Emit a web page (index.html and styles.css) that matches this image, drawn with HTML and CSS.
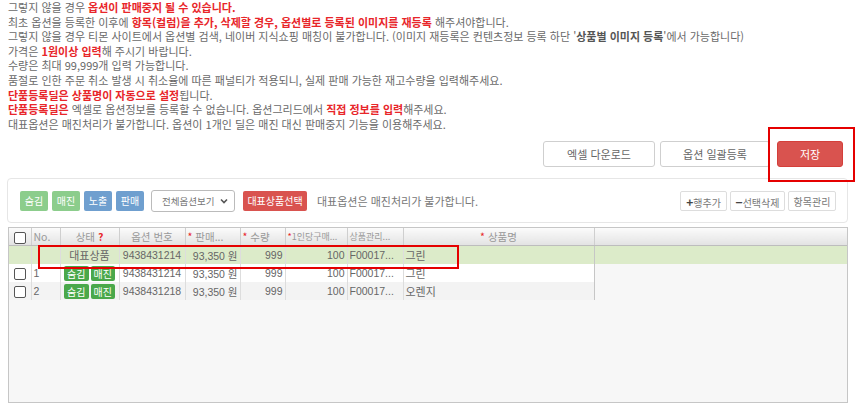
FILE: index.html
```html
<!DOCTYPE html>
<html lang="ko">
<head>
  <meta charset="UTF-8" />
  <meta name="viewport" content="width=device-width, initial-scale=1.0"/>
  <title>옵션 관리</title>
  <link rel="stylesheet" href="styles.css">
</head>
<body>
  <div class="page">
    <div class="notice">
      <p>그렇지 않을 경우 <b>옵션이 판매중지 될 수 있습니다.</b></p>
      <p>최초 옵션을 등록한 이후에 <b>항목(컬럼)을 추가, 삭제할 경우, 옵션별로 등록된 이미지를 재등록</b> 해주셔야합니다.</p>
      <p>그렇지 않을 경우 티몬 사이트에서 옵션별 검색, 네이버 지식쇼핑 매칭이 불가합니다. (이미지 재등록은 컨텐츠정보 등록 하단 '<strong>상품별 이미지 등록</strong>'에서 가능합니다)</p>
      <p>가격은 <b>1원이상 입력</b>해 주시기 바랍니다.</p>
      <p>수량은 최대 99,999개 입력 가능합니다.</p>
      <p>품절로 인한 주문 취소 발생 시 취소율에 따른 패널티가 적용되니, 실제 판매 가능한 재고수량을 입력해주세요.</p>
      <p><b>단품등록딜은 상품명이 자동으로 설정</b>됩니다.</p>
      <p><b>단품등록딜은</b> 엑셀로 옵션정보를 등록할 수 없습니다. 옵션그리드에서 <b>직접 정보를 입력</b>해주세요.</p>
      <p>대표옵션은 매진처리가 불가합니다. 옵션이 1개인 딜은 매진 대신 판매중지 기능을 이용해주세요.</p>
    </div>

    <div class="actions">
      <button class="btn btn-line btn-excel">엑셀 다운로드</button>
      <button class="btn btn-line btn-bulk">옵션 일괄등록</button>
      <button class="btn btn-save">저장</button>
    </div>

    <div class="toolbar">
      <div class="tool-left">
        <span class="chip chip-green">숨김</span>
        <span class="chip chip-green">매진</span>
        <span class="chip chip-blue">노출</span>
        <span class="chip chip-blue">판매</span>
        <div class="select">전체옵션보기
          <svg class="caret" width="8" height="6" viewBox="0 0 8 6"><path d="M1 1.5 L4 4.5 L7 1.5" fill="none" stroke="#555" stroke-width="1.6"/></svg>
        </div>
        <span class="chip chip-red">대표상품선택</span>
        <span class="hint">대표옵션은 매진처리가 불가합니다.</span>
      </div>
      <div class="tool-right">
        <span class="tbtn tbtn-add"><b>+</b>행추가</span>
        <span class="tbtn tbtn-del"><b>&minus;</b>선택삭제</span>
        <span class="tbtn tbtn-cols">항목관리</span>
      </div>
    </div>

    <div class="grid">
      <table>
        <colgroup>
          <col style="width:22px"><col style="width:29px"><col style="width:59px"><col style="width:66px">
          <col style="width:55px"><col style="width:45px"><col style="width:62px"><col style="width:56px">
          <col style="width:191px"><col>
        </colgroup>
        <thead>
          <tr>
            <th><span class="cb"></span></th>
            <th class="left">No.</th>
            <th>상태 <em>?</em></th>
            <th>옵션 번호</th>
            <th class="left"><i>*</i> 판매...</th>
            <th class="left"><i>*</i> 수량</th>
            <th class="left small"><i>*</i>1인당구매...</th>
            <th class="left small">상품관리...</th>
            <th><i>*</i> 상품명</th>
            <th class="fill"></th>
          </tr>
        </thead>
        <tbody>
          <tr class="main">
            <td></td><td></td>
            <td class="center ko">대표상품</td>
            <td class="center">9438431214</td>
            <td class="right">93,350 원</td>
            <td class="right">999</td>
            <td class="right">100</td>
            <td>F00017...</td>
            <td class="ko">그린</td>
            <td class="fill"></td>
          </tr>
          <tr>
            <td class="center"><span class="cb"></span></td><td>1</td>
            <td class="center"><span class="tag">숨김</span><span class="tag">매진</span></td>
            <td class="center">9438431214</td>
            <td class="right">93,350 원</td>
            <td class="right">999</td>
            <td class="right">100</td>
            <td>F00017...</td>
            <td class="ko">그린</td>
            <td class="fill"></td>
          </tr>
          <tr class="alt">
            <td class="center"><span class="cb"></span></td><td>2</td>
            <td class="center"><span class="tag">숨김</span><span class="tag">매진</span></td>
            <td class="center">9438431218</td>
            <td class="right">93,350 원</td>
            <td class="right">999</td>
            <td class="right">100</td>
            <td>F00017...</td>
            <td class="ko">오렌지</td>
            <td class="fill"></td>
          </tr>
        </tbody>
      </table>
    </div>
  </div>

  <div class="mark mark-save"></div>
  <div class="mark mark-row"></div>
</body>
</html>
```

FILE: styles.css
```css
body {
  margin: 0;
  font-family: "Noto Sans CJK KR", "Liberation Sans", sans-serif;
  background: #ffffff;
  color: #666;
  overflow: hidden;
  position: relative;
  height: 405px;
}

.page {
  padding: 0 12px 0 7px;
}

.notice {
  margin-top: 0;
  padding-left: 1px;
  font-size: 11px;
  line-height: 14.6px;
  color: #6a6a6a;
}

.notice p {
  margin: 0;
  white-space: nowrap;
}

.notice b {
  color: #e8262a;
}

.notice strong {
  color: #555;
}

.actions {
  display: flex;
  justify-content: flex-end;
  gap: 5px;
  margin-top: 10px;
  padding-right: 5px;
}

.btn {
  height: 26px;
  border-radius: 3px;
  font-family: inherit;
  font-size: 11px;
  cursor: pointer;
}

.btn-line {
  background: #fff;
  border: 1px solid #cfcfcf;
  color: #666;
}

.btn-excel { width: 112px; }
.btn-bulk { width: 110px; margin-right: 2px; }

.btn-save {
  width: 66px;
  background: #d9534f;
  border: 1px solid #d43f3a;
  color: #fff;
}

.toolbar {
  display: flex;
  justify-content: space-between;
  align-items: center;
  margin-top: 11px;
  height: 43px;
  border: 1px solid #e6e6e6;
  border-radius: 4px;
  padding: 0 11px 0 12px;
}

.tool-left,
.tool-right {
  display: flex;
  align-items: center;
}

.chip {
  display: inline-block;
  width: 28px;
  height: 20px;
  line-height: 20px;
  margin-right: 4px;
  border-radius: 2px;
  text-align: center;
  color: #fff;
  font-size: 10px;
}

.chip-green { background: #8ccd8c; }
.chip-blue { background: #6f9fcf; }
.chip-red { background: #d9534f; margin-left: 8px; width: 64px; }

.select {
  width: 84px;
  height: 22px;
  box-sizing: border-box;
  border: 1px solid #bbb;
  border-radius: 3px;
  margin-left: 3px;
  font-size: 9.5px;
  line-height: 20px;
  padding-left: 10px;
  color: #777;
  position: relative;
}

.caret {
  position: absolute;
  right: 6px;
  top: 7px;
}

.hint {
  margin-left: 6px;
  font-size: 11px;
  color: #777;
}

.tbtn {
  height: 20px;
  line-height: 20px;
  margin-left: 3px;
  border: 1px solid #ddd;
  border-radius: 2px;
  box-sizing: border-box;
  text-align: center;
  font-size: 10px;
  color: #777;
}

.tbtn-add { width: 47px; }
.tbtn-del { width: 55px; }
.tbtn-cols { width: 48px; }

.tbtn b {
  color: #444;
  font-size: 12px;
}

.grid {
  margin: 4px 0 0 1px;
  border: 1px solid #c6c6c6;
  background: #f7f7f7;
  height: 174px;
}

table {
  width: 100%;
  border-collapse: collapse;
  table-layout: fixed;
  font-family: "Liberation Sans", "Noto Sans CJK KR", sans-serif;
  font-size: 10.5px;
  color: #666;
}

th {
  height: 17px;
  padding: 0 2px;
  font-weight: normal;
  font-family: "Noto Sans CJK KR", "Liberation Sans", sans-serif;
  font-size: 10.5px;
  color: #999;
  background: linear-gradient(#fbfbfb, #e3e3e3);
  border-right: 1px solid #cfcfcf;
  border-bottom: 1px solid #bdbdbd;
  white-space: nowrap;
  overflow: hidden;
}

th.left { text-align: left; }
th.small { font-size: 9px; }
th.fill { border-right: none; }

th em {
  font-style: normal;
  font-weight: bold;
  color: #e8262a;
}

th i {
  font-style: normal;
  color: #e8262a;
}

td {
  height: 18px;
  padding: 0 2px;
  border-right: 1px solid #ddd;
  background: #fff;
  white-space: nowrap;
  overflow: hidden;
}

td.ko {
  font-family: "Noto Sans CJK KR", sans-serif;
  font-size: 11px;
}

td.center { text-align: center; }
td.right { text-align: right; }

td.fill {
  background: transparent;
  border-right: none;
}

tr.main td { background: #dcebc9; }
tr.alt td { background: #f3f3f3; }
tr.alt td.fill { background: transparent; }
tr td:nth-child(9) { border-right: 1px solid #c6c6c6; }

.cb {
  display: inline-block;
  width: 10px;
  height: 10px;
  border: 1px solid #555;
  border-radius: 2px;
  background: #fff;
  vertical-align: middle;
}

.tag {
  display: inline-block;
  height: 15px;
  line-height: 15px;
  padding: 0 3px;
  margin: 0 1px;
  background: #4aa84a;
  color: #fff;
  border-radius: 2px;
  font-size: 10px;
  font-family: "Noto Sans CJK KR", sans-serif;
}

.mark {
  position: absolute;
  border: 2px solid #e50000;
}

.mark-save {
  left: 768px;
  top: 127px;
  width: 83px;
  height: 51px;
}

.mark-row {
  left: 38px;
  top: 245px;
  width: 417px;
  height: 20px;
}
```
